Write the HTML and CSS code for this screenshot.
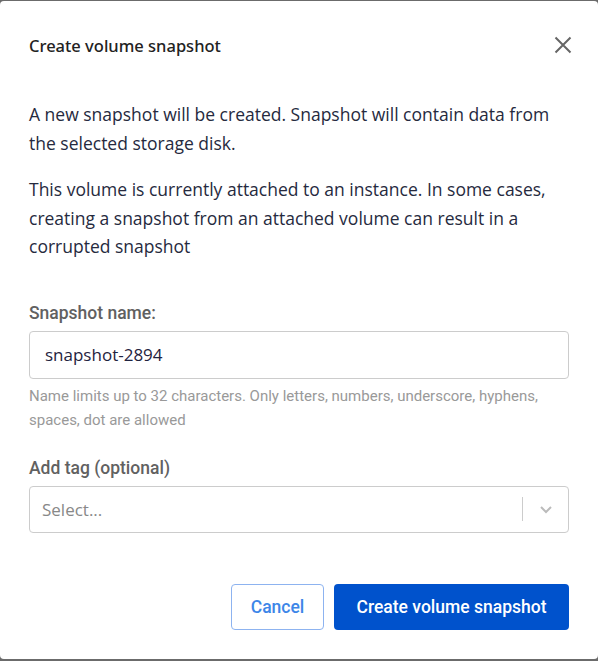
FILE: index.html
```html
<!DOCTYPE html>
<html lang="en">
<head>
<meta charset="utf-8">
<title>Create volume snapshot</title>
<link rel="stylesheet" href="styles.css">
</head>
<body>
<div class="modal">
  <header class="modal-header">
    <h2 class="modal-title">Create volume snapshot</h2>
    <button class="close" type="button" aria-label="Close">
      <svg width="18" height="18" viewBox="0 0 18 18"><path d="M1.5 1.5L16.5 16.5M16.5 1.5L1.5 16.5" stroke="#666" stroke-width="2" fill="none"/></svg>
    </button>
  </header>
  <div class="modal-body">
    <p class="text">A new snapshot will be created. Snapshot will contain data from the selected storage disk.</p>
    <p class="text">This volume is currently attached to an instance. In some cases, creating a snapshot from an attached volume can result in a corrupted snapshot</p>

    <div class="field field-name">
      <label class="label">Snapshot name:</label>
      <div class="input">snapshot-2894</div>
      <div class="hint">Name limits up to 32 characters. Only letters, numbers, underscore, hyphens, spaces, dot are allowed</div>
    </div>

    <div class="field field-tag">
      <label class="label">Add tag (optional)</label>
      <div class="select">
        <span class="placeholder">Select...</span>
        <span class="sep"></span>
        <svg class="chev" width="14" height="10" viewBox="0 0 14 10"><path d="M2 3L7 8L12 3" stroke="#bbb" stroke-width="2" fill="none"/></svg>
      </div>
    </div>
  </div>
  <footer class="modal-footer">
    <button class="btn btn-outline" type="button">Cancel</button>
    <button class="btn btn-primary" type="button">Create volume snapshot</button>
  </footer>
</div>
</body>
</html>
```
FILE: styles.css
```css
html, body {
  margin: 0;
  padding: 0;
  height: 100%;
}
body {
  background: #6b6b6b;
  padding: 1px 0 2px;
  box-sizing: border-box;
}
.modal {
  background: #fff;
  height: 100%;
  border-radius: 4px;
  box-sizing: border-box;
  padding: 0 29px;
  display: flex;
  flex-direction: column;
  font-family: "Open Sans", sans-serif;
  color: #262a3e;
}
.modal-header {
  display: flex;
  align-items: center;
  justify-content: space-between;
  height: 88px;
}
.modal-title {
  margin: 0;
  font-family: "Noto Sans", sans-serif;
  font-size: 16.5px;
  font-weight: 500;
  color: #222;
}
.close {
  border: 0;
  background: none;
  padding: 0;
  margin-right: -3px;
  display: flex;
  cursor: pointer;
}
.modal-body {
  padding-top: 11px;
}
.text {
  margin: 0 0 18px;
  font-size: 17.5px;
  line-height: 28.5px;
}
.field-name {
  margin-top: 42px;
}
.label {
  display: block;
  font-family: Roboto, sans-serif;
  font-size: 17.5px;
  font-weight: 500;
  color: #616161;
  line-height: 20px;
  margin-bottom: 8px;
}
.input {
  height: 48px;
  border: 1px solid #ccc;
  border-radius: 4px;
  box-sizing: border-box;
  display: flex;
  align-items: center;
  padding: 0 15px;
  font-size: 17px;
  color: #1f2340;
}
.hint {
  font-family: Roboto, sans-serif;
  font-size: 15px;
  line-height: 24px;
  color: #999;
  margin-top: 5px;
}
.field-tag {
  margin-top: 26px;
}
.select {
  height: 47px;
  border: 1px solid #ccc;
  border-radius: 4px;
  box-sizing: border-box;
  display: flex;
  align-items: center;
  padding-left: 12px;
}
.placeholder {
  flex: 1;
  font-size: 17px;
  color: #888;
}
.sep {
  width: 1px;
  height: 24px;
  background: #ccc;
}
.chev {
  margin: 0 15px 0 16px;
}
.modal-footer {
  margin-top: auto;
  display: flex;
  justify-content: flex-end;
  gap: 10px;
  padding-bottom: 29px;
}
.btn {
  height: 46px;
  border-radius: 4px;
  font-family: Roboto, sans-serif;
  font-size: 17.5px;
  font-weight: 500;
  cursor: pointer;
}
.btn-outline {
  width: 93px;
  background: #fff;
  border: 1px solid #8db3f0;
  color: #3d86e8;
}
.btn-primary {
  width: 235px;
  background: #0052cc;
  border: 0;
  color: #fff;
}
```
